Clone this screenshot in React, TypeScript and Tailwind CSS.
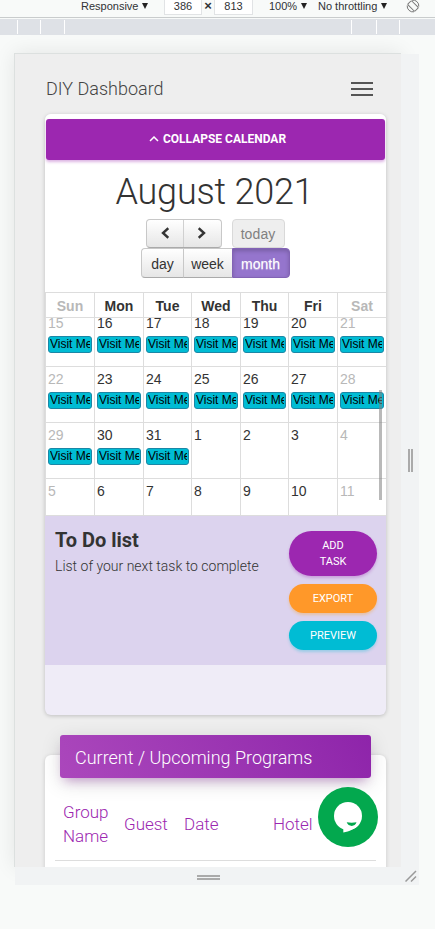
import React from "react";

const COLS = "grid grid-cols-[49px_49px_48px_49px_48px_49px_49px]";
const DAYS = ["Sun", "Mon", "Tue", "Wed", "Thu", "Fri", "Sat"];
const WEEKS = [
  { days: [15, 16, 17, 18, 19, 20, 21], events: 7 },
  { days: [22, 23, 24, 25, 26, 27, 28], events: 7 },
  { days: [29, 30, 31, 1, 2, 3, 4], events: 3 },
  { days: [5, 6, 7, 8, 9, 10, 11], events: 0 },
];

function Caret() {
  return (
    <svg width="6" height="6" viewBox="0 0 6 6" className="mb-px">
      <path d="M0 0h6L3 6z" fill="#222" />
    </svg>
  );
}

function Toolbar() {
  return (
    <div className="flex h-[18px] shrink-0 items-start border-b border-[#c9cccd] bg-[#f8faf9] pl-[81px] text-[11px] leading-[13px] text-[#303235]">
      <span className="w-[61px] whitespace-nowrap">Responsive</span>
      <span className="mt-[3px] w-[22px]"><Caret /></span>
      <span className="h-[15px] w-[38px] border border-t-0 border-[#e1e3e5] bg-white text-center">386</span>
      <span className="w-3 text-center text-[13px] leading-[11px] font-bold">×</span>
      <span className="h-[15px] w-[39px] border border-t-0 border-[#e1e3e5] bg-white text-center">813</span>
      <span className="ml-4 w-[32px]">100%</span>
      <span className="mt-[3px] w-[17px]"><Caret /></span>
      <span className="w-[63px] whitespace-nowrap">No throttling</span>
      <span className="mt-[3px] w-[25px]"><Caret /></span>
      <svg width="14" height="14" viewBox="0 0 14 14" className="-mt-[1px] shrink-0" fill="none" stroke="#777" strokeWidth="1">
        <rect x="4.3" y="2" width="5.4" height="10" rx="1" transform="rotate(-45 7 7)" />
        <path d="M6 1.2A5.8 5.8 0 0 1 12.8 7.5M8 12.8A5.8 5.8 0 0 1 1.2 6.5" />
      </svg>
    </div>
  );
}

function Ruler() {
  return (
    <div className="mt-px flex h-4 shrink-0 bg-[#dee1e6] pt-px pb-px">
      <i className="w-[18px] border-r border-white" />
      <i className="w-[23px] border-r border-white" />
      <i className="w-[24px] border-r border-white" />
      <i className="w-[287px] border-r border-white" />
      <i className="w-[25px] border-r border-white" />
      <i className="w-[23px] border-r border-white" />
    </div>
  );
}

function CalendarControls() {
  const face = "border-[#c8c8c8] bg-linear-to-b from-white to-[#e6e6e6]";
  return (
    <div className="flex flex-col items-center text-[14px] text-[#333]">
      <div className="mr-px flex h-[29px] gap-[10px] leading-[28px]">
        <div className={`flex w-[76px] rounded-[4px] border border-b-[#aaa] ${face}`}>
          <span className="flex w-[37px] items-center justify-center border-r border-[#d0d0d0]">
            <svg width="8" height="12" viewBox="0 0 8 12" fill="none" stroke="#333" strokeWidth="2.4" className="-mt-px"><path d="M7.3 1.200 2 6l5.300 4.800" /></svg>
          </span>
          <span className="flex flex-1 items-center justify-center">
            <svg width="8" height="12" viewBox="0 0 8 12" fill="none" stroke="#333" strokeWidth="2.4" className="-mt-px"><path d="M.7 1.200 6 6 .7 10.800" /></svg>
          </span>
        </div>
        <div className="w-[53px] rounded-[4px] border border-[#d9d9d9] bg-[#eeeeee] text-center leading-[29px] tracking-[0.1px] text-[#808080]">today</div>
      </div>
      <div className="mr-px flex h-[30px] text-center leading-[30px]">
        <span className={`w-[42px] rounded-l-[4px] border border-r-0 border-b-[#aaa] pl-px ${face}`}>day</span>
        <span className={`w-[49px] border border-r-0 border-b-[#aaa] ${face}`}>week</span>
        <span className="w-[58px] rounded-r-[4px] border border-[#8263b5] bg-[#9575cd] text-white shadow-[inset_0_2px_4px_rgba(0,0,0,0.2)] [text-shadow:0_1px_1px_rgba(255,255,255,0.5)]">month</span>
      </div>
    </div>
  );
}

function Calendar() {
  return (
    <div className="relative mt-[14px] h-[224px] overflow-hidden border-t border-b border-[#ddd] text-[14px] text-[#333]">
      <div className={`${COLS} h-[25px] border-b border-[#ddd]`}>
        {DAYS.map((d, i) => (
          <div key={d} className={`border-l border-[#ddd] pt-px text-center leading-[24px] font-bold ${i % 6 === 0 ? "text-[#b8b8b8]" : ""}`}>{d}</div>
        ))}
      </div>
      <div className="h-[197px] overflow-hidden">
        {WEEKS.map((w, r) => (
          <div key={r} className={`${COLS} ${r === 0 ? "-mt-[7px]" : ""} h-[56px] border-b border-[#ddd]`}>
            {w.days.map((d, i) => (
              <div key={d} className={`min-w-0 border-l border-[#ddd] px-[2px] pt-[4px] ${i % 6 === 0 ? "text-[#b8b8b8]" : ""}`}>
                <div className="h-[21px] leading-[17px]">{d}</div>
                {i < w.events && (
                  <div className="h-[17px] overflow-hidden rounded-[3px] border border-[#1b87a6] bg-[#00bcd4] pr-px pl-px text-[12px] leading-[15px] text-black">
                    <div className="overflow-hidden whitespace-nowrap">Visit Me</div>
                  </div>
                )}
              </div>
            ))}
          </div>
        ))}
      </div>
      <div className="absolute top-[97px] right-[4px] h-[110px] w-[3px] bg-[#808080]/55" />
    </div>
  );
}

function TodoPanel() {
  const pill = "flex w-[88px] items-center justify-center rounded-[30px] text-center text-[11px] leading-4 text-white";
  return (
    <div className="flex h-[149px] justify-between bg-[#dcd3ee] pt-[15px] pr-[9px] pl-[10px]">
      <div>
        <h2 className="text-[20px] leading-[18px] font-bold text-[#333]">To Do list</h2>
        <p className="mt-[7px] text-[14px] leading-5 font-light whitespace-nowrap text-[#333]">List of your next task to complete</p>
      </div>
      <div className="flex flex-col gap-2">
        <button className={`${pill} h-[45px] bg-[#9c27b0] px-6 shadow-[0_2px_3px_rgba(156,39,176,0.3)]`}>ADD TASK</button>
        <button className={`${pill} h-[29px] bg-[#ff9829] shadow-[0_2px_3px_rgba(255,152,0,0.3)]`}>EXPORT</button>
        <button className={`${pill} h-[29px] bg-[#00bcd4] shadow-[0_2px_3px_rgba(0,188,212,0.3)]`}>PREVIEW</button>
      </div>
    </div>
  );
}

function Programs() {
  return (
    <div className="mt-[40px] h-[150px] rounded-t-[6px] bg-white px-[10px] shadow-[0_1px_4px_rgba(0,0,0,0.16)]">
      <div className="relative -top-5 mr-[5px] ml-[5px] h-[43px] rounded-[3px] bg-linear-60 from-[#ab47bc] to-[#8e24aa] pl-[15px] text-[18px] leading-[45px] font-light text-white shadow-[0_5px_20px_rgba(0,0,0,0.14),0_7px_10px_-5px_rgba(156,39,176,0.4)]">
        Current / Upcoming Programs
      </div>
      <div className="flex h-[63px] items-center border-b border-[#ddd] pb-[11px] pl-2 text-[17px] leading-6 font-light text-[#9c27b0]">
        <span className="w-[61px]">Group<br />Name</span>
        <span className="w-[60px]">Guest</span>
        <span className="w-[89px]">Date</span>
        <span>Hotel</span>
      </div>
    </div>
  );
}

function ChatBubble() {
  return (
    <svg className="absolute top-[733px] left-[303px]" width="60" height="60" viewBox="0 0 60 60">
      <circle cx="30" cy="30" r="30" fill="#03a84e" />
      <circle cx="30" cy="29" r="14" fill="#fff" />
      <path d="M25.300 41v4.600c6-1.300 11.700-3.600 15.200-7.600z" fill="#fff" />
      <path d="M28.700 35.300q5 .8 9.800 0c-.6 2.200-2.600 3.600-4.700 3.600-2.300 0-4.300-1.400-5.100-3.600z" fill="#03a84e" />
    </svg>
  );
}

function Phone() {
  return (
    <div className="relative h-[813px] w-[386px] overflow-hidden bg-[#eeeeee] pr-[15px] pl-[30px] font-[Roboto,sans-serif]">
      <header className="flex h-[60px] items-start justify-between pt-[24px] pr-[13px] pl-px">
        <h1 className="text-[18px] leading-[22px] font-light text-[#444]">DIY Dashboard</h1>
        <div className="mt-[4px] flex w-[22px] flex-col gap-1">
          <i className="h-[2px] bg-[#555]" />
          <i className="h-[2px] bg-[#555]" />
          <i className="h-[2px] bg-[#555]" />
        </div>
      </header>
      <section className="h-[601px] overflow-hidden rounded-[6px] bg-[#efecf7] shadow-[0_1px_4px_rgba(0,0,0,0.2)]">
        <div className="h-[402px] bg-white pt-[5px]">
          <button className="mx-px flex h-[41px] w-[339px] items-center justify-center gap-1 rounded-[3px] bg-[#9c27b0] pb-px pl-[4px] text-[12px] font-bold text-white shadow-[0_2px_3px_rgba(156,39,176,0.35)]">
            <svg width="10" height="6" viewBox="0 0 10 6" fill="none" stroke="white" strokeWidth="1.5"><path d="m1 5 4-4 4 4" /></svg>
            COLLAPSE CALENDAR
          </button>
          <h2 className="mt-[7px] mr-[2px] h-[52px] text-center text-[36px] leading-[50px] font-light tracking-[-0.2px] whitespace-nowrap text-[#333]">August 2021</h2>
          <div className="font-['Liberation_Sans',Arial,sans-serif]">
            <CalendarControls />
            <Calendar />
          </div>
        </div>
        <TodoPanel />
      </section>
      <Programs />
      <ChatBubble />
    </div>
  );
}

export default function App() {
  return (
    <main className="flex h-[929px] w-[435px] flex-col overflow-hidden bg-[#f8faf9] font-['Liberation_Sans',Arial,sans-serif]">
      <Toolbar />
      <Ruler />
      <div className="mt-[18px] ml-[14px] flex">
        <div className="border-t border-l border-[#dce0df] shadow-[0_0_20px_rgba(0,0,0,0.09)]"><Phone /></div>
        <div className="z-10 mt-px flex w-[18px] items-center justify-center gap-px bg-[#f1f3f4]">
          <i className="h-[23px] w-[2px] bg-[#aaa]" />
          <i className="h-[23px] w-[2px] bg-[#aaa]" />
        </div>
      </div>
      <div className="z-10 ml-[15px] flex h-[18px] w-[404px] items-center justify-between bg-[#f1f3f4]">
        <div className="ml-[182px] mt-[3px] flex w-[23px] flex-col gap-px">
          <i className="h-[2px] bg-[#aaa]" />
          <i className="h-[2px] bg-[#aaa]" />
        </div>
        <svg width="12" height="12" viewBox="0 0 12 12" className="mr-[2px]" stroke="#9a9a9a" strokeWidth="1.5"><path d="M.5 11.500 11 1M6 11.500l5-5" /></svg>
      </div>
    </main>
  );
}
